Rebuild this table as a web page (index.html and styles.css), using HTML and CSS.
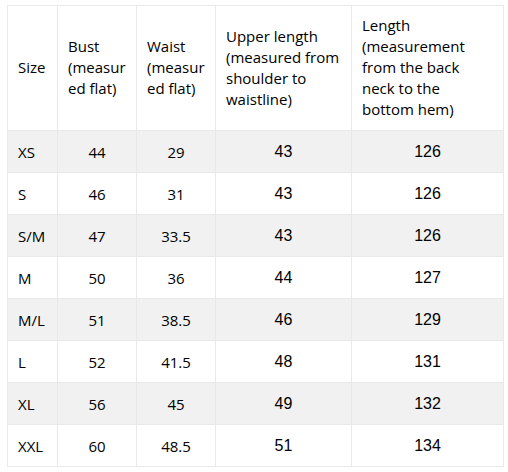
FILE: index.html
```html
<!DOCTYPE html>
<html>
<head>
<meta charset="utf-8">
<link rel="stylesheet" href="styles.css">
</head>
<body>
<div class="wrap">
<table class="size-table">
<colgroup>
<col class="c1"><col class="c2"><col class="c3"><col class="c4"><col class="c5">
</colgroup>
<thead>
<tr>
<th>Size</th>
<th>Bust (measured flat)</th>
<th>Waist (measured flat)</th>
<th>Upper length (measured from shoulder to waistline)</th>
<th>Length (measurement from the back neck to the bottom hem)</th>
</tr>
</thead>
<tbody>
<tr><td class="sz">XS</td><td class="n">44</td><td class="n">29</td><td class="a">43</td><td class="a">126</td></tr>
<tr><td class="sz">S</td><td class="n">46</td><td class="n">31</td><td class="a">43</td><td class="a">126</td></tr>
<tr><td class="sz">S/M</td><td class="n">47</td><td class="n">33.5</td><td class="a">43</td><td class="a">126</td></tr>
<tr><td class="sz">M</td><td class="n">50</td><td class="n">36</td><td class="a">44</td><td class="a">127</td></tr>
<tr><td class="sz">M/L</td><td class="n">51</td><td class="n">38.5</td><td class="a">46</td><td class="a">129</td></tr>
<tr><td class="sz">L</td><td class="n">52</td><td class="n">41.5</td><td class="a">48</td><td class="a">131</td></tr>
<tr><td class="sz">XL</td><td class="n">56</td><td class="n">45</td><td class="a">49</td><td class="a">132</td></tr>
<tr><td class="sz">XXL</td><td class="n">60</td><td class="n">48.5</td><td class="a">51</td><td class="a">134</td></tr>
</tbody>
</table>
</div>
</body>
</html>
```
FILE: styles.css
```css
html, body {
  margin: 0;
  padding: 0;
  background: #ffffff;
}
.wrap {
  padding: 5px 0 0 7px;
}
.size-table {
  border-collapse: collapse;
  table-layout: fixed;
  width: 496px;
  font-family: "Open Sans", "Noto Sans", sans-serif;
  color: #000;
  border: 1px solid #e9e9e9;
}
.c1 { width: 50px; }
.c2 { width: 79px; }
.c3 { width: 79px; }
.c4 { width: 136px; }
.c5 { width: 152px; }
.size-table th,
.size-table td {
  border: 1px solid #e9e9e9;
}
.size-table th {
  font-weight: normal;
  text-align: left;
  font-size: 15px;
  line-height: 21px;
  padding: 9px 9px 10px 10px;
  height: 105px;
  overflow-wrap: anywhere;
  vertical-align: middle;
}
.size-table td {
  height: 42px;
  padding: 0 10px;
  box-sizing: border-box;
  font-size: 15px;
  vertical-align: middle;
}
.size-table tbody tr:nth-child(odd) {
  background: #f1f1f1;
}
.size-table td.sz { text-align: left; }
.size-table td.n { text-align: center; }
.size-table td.a {
  text-align: center;
  font-family: "Liberation Sans", Arial, sans-serif;
  font-size: 16px;
}
```
